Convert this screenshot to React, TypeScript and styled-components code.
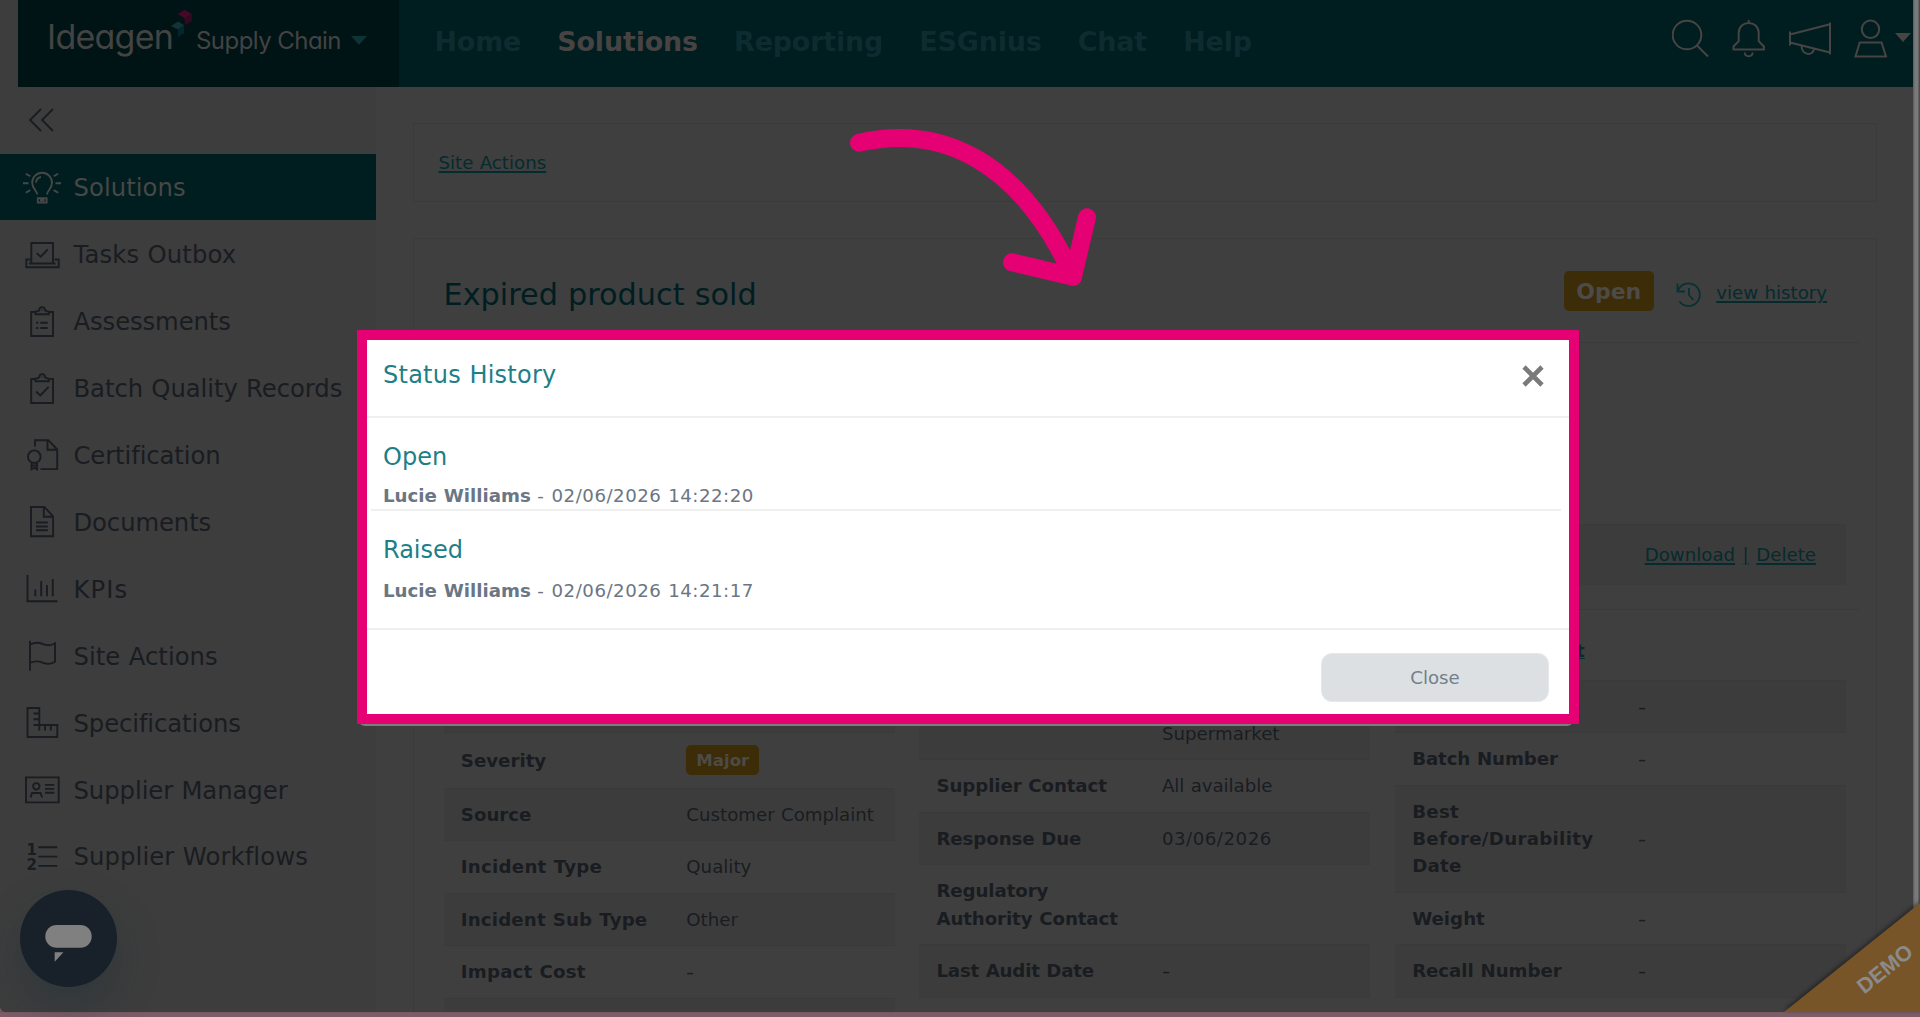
import React from "react";
import styled, { createGlobalStyle, css } from "styled-components";

const c = {
  ground: "#3f3f3f",
  side: "#3d3d3d",
  line: "#3a3a3a",
  shade: "#3c3c3c",
  header: "#001d20",
  brand: "#001315",
  navDim: "#0e2c2f",
  ink: "#191c21",
  teal: "#052b2e",
  title: "#001e21",
  amber: "#3d2c08",
  pink: "#e50073",
};

const Global = createGlobalStyle`
  * { box-sizing: border-box; }
  html, body { margin: 0; padding: 0; overflow: hidden; background: #7c5b65; }
  body {
    font-family: Verdana, "DejaVu Sans", sans-serif;
    font-size: 18.2px;
    word-spacing: 0.03em;
    color: ${c.ink};
  }
`;

const Screen = styled.div`
  position: relative;
  width: 1920px;
  height: 1017px;
  overflow: hidden;
  display: flex;
  flex-direction: column;
  background: linear-gradient(#664d54, #7e5c67 2px, #7e5c67) bottom / 100% 6px no-repeat;
`;

const Frame = styled.div`
  height: 1012px;
  display: flex;
`;

const Page = styled.div`
  width: 1913px;
  height: 1012px;
  overflow: hidden;
  border-bottom-left-radius: 6px;
  background: ${c.ground};
  display: flex;
  flex-direction: column;
`;

const Edge = styled.div`
  width: 7px;
  background: linear-gradient(90deg, #5a5a5a, #7a7a7a 2px, #7a7a7a 5px, #4c4c4c 6px, #4c4c4c);
`;

const Header = styled.header`
  height: 86.5px;
  margin-left: 18px;
  display: flex;
  background: ${c.header};
`;

const HeaderBand = styled.div`
  flex: none;
  background: ${c.side};
`;

const Brand = styled.div`
  width: 381px;
  height: 100%;
  background: ${c.brand};
  padding-left: 29px;
  display: flex;
  font-family: Inter, sans-serif;
  font-feature-settings: "cv11", "ss01";
  word-spacing: 0;
  color: #434343;
`;

const BrandName = styled.span`
  font-size: 34px;
  line-height: 40px;
  margin-top: 17px;
  width: 124px;
  letter-spacing: -0.75px;
  white-space: nowrap;
`;

const Spark = styled.svg`
  width: 22px;
  height: 30px;
  margin-top: 9px;
`;

const Product = styled.span`
  font-size: 24px;
  line-height: 30px;
  margin: 26px 0 0 3px;
  width: 144px;
  letter-spacing: -0.55px;
  white-space: nowrap;
`;

const Caret = styled.i<{ $color: string }>`
  width: 0;
  height: 0;
  border: 8px solid transparent;
  border-top: 9px solid ${(p) => p.$color};
  border-bottom: 0;
`;

const BrandCaret = styled(Caret)`
  margin: 36px 0 0 11px;
`;

const Nav = styled.nav`
  display: flex;
  gap: 36.2px;
  padding: 22px 0 0 35.5px;
  flex: 1;
`;

const NavItem = styled.a<{ $active?: boolean }>`
  font-size: 26.9px;
  line-height: 40px;
  font-weight: 700;
  letter-spacing: -0.15px;
  color: ${(p) => (p.$active ? "#474343" : c.navDim)};
`;

const Tools = styled.div`
  display: flex;
  padding: 17px 2px 0 0;
  svg {
    height: 44px;
    display: block;
  }
`;

const ToolCaret = styled(Caret)`
  margin-top: 16px;
`;

const Body = styled.div`
  flex: 1;
  min-height: 0;
  display: flex;
`;

const Sidebar = styled.aside`
  width: 376px;
  flex: none;
  background: ${c.side};
`;

const Collapse = styled.div`
  height: 67px;
  padding: 21.5px 0 0 28px;
  svg {
    display: block;
  }
`;

const SideItem = styled.a<{ $active?: boolean; $track?: number }>`
  height: 66.95px;
  padding: 1.3px 0 0 22px;
  display: flex;
  align-items: center;
  gap: 11.5px;
  font-size: 24.3px;
  letter-spacing: ${(p) => p.$track ?? 0.05}px;
  white-space: nowrap;
  ${(p) =>
    p.$active &&
    css`
      background: ${c.header};
      color: #474747;
    `}
  svg {
    flex: none;
  }
`;

const Main = styled.main`
  flex: 1;
  padding: 36.5px 36px 0 36.5px;
  display: flex;
  flex-direction: column;
  gap: 36px;
`;

const Card = styled.section<{ $grow?: boolean }>`
  border: 1px solid ${c.line};
  ${(p) =>
    p.$grow
      ? css`
          flex: 1;
          min-height: 0;
          overflow: hidden;
          border-bottom: 0;
        `
      : css`
          height: 79px;
          display: flex;
          align-items: center;
          padding: 0 0 1px 25px;
        `}
`;

const Link = styled.a`
  color: ${c.teal};
  text-decoration: underline;
  text-decoration-thickness: 1.5px;
  text-underline-offset: 2px;
  white-space: nowrap;
`;

const CardHead = styled.div`
  height: 104px;
  margin: 0 17px 0 18px;
  padding: 0 32px 0 12px;
  border-bottom: 1px solid ${c.line};
  display: flex;
  align-items: center;
`;

const Title = styled.h1`
  margin: 8px auto 0 0;
  font-size: 30.3px;
  font-weight: 400;
  color: ${c.title};
`;

const Badge = styled.span<{ $large?: boolean }>`
  display: inline-flex;
  align-items: center;
  justify-content: center;
  background: ${c.amber};
  color: #4c4b47;
  font-weight: 700;
  border-radius: 5px;
  ${(p) =>
    p.$large
      ? css`
          width: 90px;
          height: 40px;
          padding-top: 1px;
          margin-top: 1px;
          font-size: 22px;
        `
      : css`
          width: 73px;
          height: 30.4px;
          font-size: 16.6px;
        `}
`;

const HistoryIcon = styled.svg`
  width: 27px;
  height: 27px;
  margin: 7px 14px 0 21.5px;
`;

const HistoryLink = styled(Link)`
  margin-top: 4px;
`;

const FileRow = styled.div`
  height: 61px;
  margin: 181px 30px 24px;
  padding: 0 30px 1.5px 0;
  background: ${c.shade};
  border-top: 1px solid ${c.line};
  display: flex;
  align-items: center;
  justify-content: flex-end;
  gap: 7.5px;
`;

const Columns = styled.div`
  margin: 0 17px 0 18px;
  padding: 0 13px 0 12px;
  border-top: 1px solid ${c.line};
  display: grid;
  grid-template-columns: repeat(3, 1fr);
  column-gap: 24.5px;
`;

const ColumnHead = styled.h2`
  height: 69.5px;
  margin: 0;
  padding: 27px 0 0 17px;
  width: 190px;
  text-align: right;
  font-size: 18.2px;
  line-height: 27px;
  color: ${c.teal};
  text-decoration: underline;
`;

const DataRow = styled.div<{ $shade: boolean }>`
  display: grid;
  grid-template-columns: 225.5px 1fr;
  align-items: center;
  border-top: 1px solid ${c.line};
  background: ${(p) => (p.$shade ? c.shade : "transparent")};
  line-height: 27.3px;
  & > * {
    padding: 12.1px 0 12.1px 17.3px;
    min-height: 51.5px;
  }
`;

const Term = styled.b<{ $track?: number }>`
  white-space: pre-line;
  letter-spacing: ${(p) => p.$track ?? 0}px;
`;

const Value = styled.span<{ $flush?: boolean; $track?: number }>`
  white-space: pre-line;
  letter-spacing: ${(p) => p.$track ?? 0}px;
  ${(p) =>
    p.$flush &&
    css`
      display: flex;
    `}
`;

const TableEnd = styled.div`
  border-top: 1px solid ${c.line};
`;

/* An unset value, drawn a little wider than a plain hyphen. */
const Unset = styled.span`
  display: inline-block;
  transform: scaleX(1.25);
  transform-origin: 0 50%;
`;

const Modal = styled.div`
  position: absolute;
  left: 357px;
  top: 330px;
  width: 1222px;
  height: 394px;
  border: 10px solid ${c.pink};
  background: #fff;
  color: #6b7684;
  display: flex;
  flex-direction: column;
`;

const ModalLip = styled.div`
  position: absolute;
  left: 359px;
  top: 710px;
  width: 1214px;
  height: 15.5px;
  border-radius: 6px;
  background: #7d7d7d;
`;

const ModalHead = styled.div`
  height: 78px;
  padding: 0 25px 6px 16px;
  border-bottom: 2px solid #efefef;
  display: flex;
  align-items: center;
  justify-content: space-between;
`;

const ModalTitle = styled.h2<{ $track?: number }>`
  margin: 0;
  font-size: 24px;
  line-height: 30px;
  font-weight: 400;
  letter-spacing: ${(p) => p.$track ?? 0}px;
  color: #1d7f88;
`;

const CloseMark = styled.svg`
  display: block;
  margin-top: 2px;
`;

const Entry = styled.div<{ $last?: boolean }>`
  margin: 0 8px 0 4px;
  padding: 24px 0 0 12px;
  ${(p) => !p.$last && "border-bottom: 2px solid #efefef;"}
`;

const EntryMeta = styled.div<{ $last?: boolean }>`
  margin-top: ${(p) => (p.$last ? 12.5 : 11)}px;
  height: ${(p) => (p.$last ? 25 : 26)}px;
  line-height: 25px;
`;

const Stamp = styled.span`
  letter-spacing: 0.5px;
  margin-left: 1.5px;
`;

const ModalFoot = styled.div`
  margin-top: auto;
  height: 86px;
  padding: 23px 20px 0 0;
  border-top: 2px solid #efefef;
  display: flex;
  justify-content: flex-end;
`;

const CloseButton = styled.button`
  width: 228px;
  height: 49px;
  padding: 0;
  border: 1px solid #e4e8ea;
  border-radius: 11px;
  background: #dce0e3;
  color: #747f8c;
  font: inherit;
`;

const Arrow = styled.svg`
  position: absolute;
  left: 840px;
  top: 120px;
`;

const ChatButton = styled.div`
  position: absolute;
  left: 20px;
  top: 890px;
  width: 97px;
  height: 97px;
  border-radius: 50%;
  background: #18212a;
  box-shadow: 0 20px 40px rgba(24, 45, 55, 0.35);
`;

const Ribbon = styled.div`
  position: absolute;
  left: 1784px;
  top: 903px;
  width: 136px;
  height: 109px;
  filter: drop-shadow(0 -2px 2px rgba(0, 0, 0, 0.45));
`;

const RibbonFace = styled.div`
  width: 136px;
  height: 109px;
  background: #785528;
  clip-path: polygon(100% 0, 100% 100%, 0 100%);
`;

const RibbonText = styled.span`
  position: absolute;
  left: 1850px;
  top: 956px;
  width: 70px;
  text-align: center;
  font: 700 21.5px/26px "Liberation Sans", Arial, sans-serif;
  color: #8b8b8b;
  transform: rotate(-38.7deg);
`;

const iconArt: Record<string, React.ReactNode> = {
  bulb: (
    <>
      <path d="M15.2 26.5c0-4-5-5.600-5-11.800a9.900 9.900 0 0 1 19.800 0c0 6.200-5 7.800-5 11.800" />
      <path d="M14 14.500c.3-3 2-5 5-5.500M15.800 30.200h8.800v4.300h-8.800zM18 32.300h4.500" />
      <path d="M1 15.200h5.500M33.500 15.200H39M3.800 5.700l4.500 2.600M36.200 5.700l-4.500 2.600M3.800 24.700l4.500-2.600M36.200 24.700l-4.500-2.600" />
    </>
  ),
  tasks: (
    <>
      <path d="M9.300 28V8H31v20M7 28.500h26.500" />
      <path d="M8.500 24.500H4.300v7.800h32.400v-7.800h-4.200" />
      <path d="M14.700 18.200l4 3.600 7-7.300" />
    </>
  ),
  assess: (
    <>
      <path d="M14 11H9.200v24H31V11h-4.800" />
      <path d="M13.500 13.200v-2.400l3.600-1.200c.3-4.600 5.800-4.600 6.100 0l3.600 1.200v2.400zM20.200 8.800v.8" />
      <path d="M14 21.700h2.300M18.300 21.700h7.500M14 27h2.300M18.300 27h7.500" />
    </>
  ),
  batch: (
    <>
      <path d="M14 11H9.200v24H31V11h-4.800" />
      <path d="M13.500 13.200v-2.400l3.600-1.200c.3-4.600 5.800-4.600 6.100 0l3.600 1.200v2.400zM20.200 8.800v.8" />
      <path d="M14 23.500l4.300 3.900 8.300-8.600" />
    </>
  ),
  cert: (
    <>
      <path d="M13 11.500V5.200h13.300l8.900 9.300v19.600H18.500M25.500 5.200v9.600h9.500" />
      <circle cx="12.300" cy="21.700" r="6.300" />
      <path d="M9.500 28v6.400l2.800-1.600 2.700 1.600V28M9.500 30.500h5.500" />
    </>
  ),
  docs: (
    <>
      <path d="M9 5h13.500l8.600 9.300V34.200H9zM21.800 5v9.800h9" />
      <path d="M14 20.500h11.800M14 24.500h11.800M14 28.300h11.800" />
    </>
  ),
  kpi: (
    <path d="M5.500 6v26.200h30M13.300 20.500v6.700M19.200 12v15.200M25 16v11.200M30.800 10v17.200" />
  ),
  flag: (
    <path d="M8 4.700v30M8 8.500c4-2 8.500-2.400 12.500-.6s8.500 2 12.500-.6v18.500c-4 2.500-8.500 2.500-12.500.8s-8.500-1.600-12.500.3" />
  ),
  ruler: (
    <path d="M5.500 5h11.800v17h18v12H5.500zM11.500 10.500h5.500M11.500 16.200h5.500M11.500 22h6M17.300 22v5.500M23 22v5.500M28.800 22v5.500" />
  ),
  manager: (
    <>
      <path d="M4 7.400h32.700v25H4zM23 14.900h9.300M23 18.900h9.300M23 22.700h9.300" />
      <circle cx="14.300" cy="16.300" r="3.200" />
      <path d="M8.500 27.500l1.500-4.500h8.500l1.700 4.500" />
    </>
  ),
  flow: (
    <>
      <path d="M16.300 10.200h19M16.300 19.600h19M16.300 28.900h19" />
      <text x="4.500" y="17.500">1</text>
      <text x="4.500" y="33">2</text>
    </>
  ),
};

const IconSvg = styled.svg`
  width: 40px;
  height: 40px;
  fill: none;
  stroke: currentColor;
  stroke-width: 1.9;
  text {
    font: 700 15px "DejaVu Sans", sans-serif;
    fill: currentColor;
    stroke: none;
  }
`;

const menu: { icon: string; label: string; track?: number }[] = [
  { icon: "bulb", label: "Solutions" },
  { icon: "tasks", label: "Tasks Outbox", track: 0.12 },
  { icon: "assess", label: "Assessments", track: -0.1 },
  { icon: "batch", label: "Batch Quality Records", track: -0.05 },
  { icon: "cert", label: "Certification", track: -0.1 },
  { icon: "docs", label: "Documents", track: -0.1 },
  { icon: "kpi", label: "KPIs", track: 1.1 },
  { icon: "flag", label: "Site Actions" },
  { icon: "ruler", label: "Specifications", track: -0.1 },
  { icon: "manager", label: "Supplier Manager", track: -0.05 },
  { icon: "flow", label: "Supplier Workflows", track: 0.1 },
];

type Row = {
  term?: string;
  value?: React.ReactNode;
  termTrack?: number;
  valueTrack?: number;
};

const columns: { head: string; rows: Row[] }[] = [
  {
    head: "",
    rows: [
      {},
      { term: "Severity", value: <Badge>Major</Badge> },
      { term: "Source", value: "Customer Complaint" },
      { term: "Incident Type", value: "Quality", termTrack: 0.25 },
      { term: "Incident Sub Type", value: "Other", termTrack: 0.15 },
      { term: "Impact Cost", value: "-", termTrack: 0.2 },
      {},
    ],
  },
  {
    head: "",
    rows: [
      { term: "Name", value: "\nSupermarket" },
      { term: "Supplier Contact", value: "All available", termTrack: -0.1, valueTrack: -0.05 },
      { term: "Response Due", value: "03/06/2026", valueTrack: 0.5, termTrack: -0.1 },
      { term: "Regulatory Authority Contact", termTrack: -0.1 },
      { term: "Last Audit Date", value: "-", termTrack: -0.2 },
    ],
  },
  {
    head: "Product",
    rows: [
      { value: "-" },
      { term: "Batch Number", value: "-", termTrack: -0.1 },
      { term: "Best Before/Durability Date", value: "-", termTrack: 0.3 },
      { term: "Weight", value: "-" },
      { term: "Recall Number", value: "-", termTrack: -0.05 },
    ],
  },
];

const history = [
  { state: "Open", who: "Lucie Williams", when: "02/06/2026 14:22:20" },
  { state: "Raised", who: "Lucie Williams", when: "02/06/2026 14:21:17" },
];

function HeaderTools() {
  return (
    <Tools>
      <svg width="223" viewBox="1672 17 223 44" fill="none" stroke="#474444" strokeWidth="2">
        <circle cx="1687" cy="35" r="14.300" />
        <path d="M1697 45.500l11 11" />
        <path d="M1748.700 20v3M1733.500 49.500v-3l5.200-5.300V33c0-13.500 20-13.500 20 0v8.200l5.200 5.300v3zM1744.700 52.500c.5 5 7.500 5 8 0" />
        <path d="M1790 31.500v14M1790 34.500l40-10.200M1790 42.500l40 10M1830 22.500v32M1801.500 46c.5 9.500 11.500 10.500 12.500 3" />
        <circle cx="1870.500" cy="29.300" r="8.700" />
        <path d="M1859.700 42.500h21.800l4.500 14h-30.500z" />
      </svg>
      <ToolCaret $color="#474444" />
    </Tools>
  );
}

export default function App() {
  return (
    <Screen>
      <Global />
      <Frame>
        <Page>
          <HeaderBand>
            <Header>
              <Brand>
                <BrandName>Ideagen</BrandName>
                <Spark viewBox="0 0 22 30">
                  <path d="M6.500 5L13.500.8 20.700 5v7L14 16l-.5-7z" fill="#430a27" />
                  <path d="M14 9l6.700-4v7L14 16z" fill="#340820" />
                  <path d="M0 17l7-4.500L13 16v8l-6 3.800v-7.300z" fill="#12333a" />
                  <path d="M7 20.500l6-4.500v8l-6 3.800z" fill="#02262c" />
                </Spark>
                <Product>Supply Chain</Product>
                <BrandCaret $color="#0e3235" />
              </Brand>
              <Nav>
                {["Home", "Solutions", "Reporting", "ESGnius", "Chat", "Help"].map((n) => (
                  <NavItem key={n} $active={n === "Solutions"}>
                    {n}
                  </NavItem>
                ))}
              </Nav>
              <HeaderTools />
            </Header>
          </HeaderBand>
          <Body>
            <Sidebar>
              <Collapse>
                <svg width="27" height="24" fill="none" stroke={c.ink} strokeWidth="1.800">
                  <path d="M13 1L2 12l11 11M25 1L14 12l11 11" />
                </svg>
              </Collapse>
              {menu.map(({ icon, label, track }) => (
                <SideItem key={label} $active={icon === "bulb"} $track={track}>
                  <IconSvg viewBox="0 0 40 40">{iconArt[icon]}</IconSvg>
                  {label}
                </SideItem>
              ))}
            </Sidebar>
            <Main>
              <Card>
                <Link>Site Actions</Link>
              </Card>
              <Card $grow>
                <CardHead>
                  <Title>Expired product sold</Title>
                  <Badge $large>Open</Badge>
                  <HistoryIcon viewBox="0 0 27 27" fill="none" stroke="#073235" strokeWidth="1.800">
                    <path d="M2.500 2.500v8h7.500M3 9.500a11.300 11.300 0 1 1 1.500 11M14 7v7l4.500 5" />
                  </HistoryIcon>
                  <HistoryLink>view history</HistoryLink>
                </CardHead>
                <FileRow>
                  <Link>Download</Link>
                  <Link>|</Link>
                  <Link>Delete</Link>
                </FileRow>
                <Columns>
                  {columns.map((col, i) => (
                    <div key={i}>
                      <ColumnHead>{col.head}</ColumnHead>
                      {col.rows.map((row, r) => (
                        <DataRow key={r} $shade={r % 2 === 0}>
                          <Term $track={row.termTrack}>{row.term}</Term>
                          <Value $flush={typeof row.value === "object"} $track={row.valueTrack}>
                            {row.value === "-" ? <Unset>-</Unset> : row.value}
                          </Value>
                        </DataRow>
                      ))}
                      <TableEnd />
                    </div>
                  ))}
                </Columns>
              </Card>
            </Main>
          </Body>
        </Page>
        <Edge />
      </Frame>

      <ChatButton>
        <svg width="97" height="97" fill="#808080">
          <rect x="25.300" y="35" width="46.400" height="22.700" rx="11.300" />
          <path d="M34.700 62.300h8.700l-8.700 9.400z" />
        </svg>
      </ChatButton>

      <Ribbon>
        <RibbonFace />
      </Ribbon>
      <RibbonText>DEMO</RibbonText>

      <ModalLip />
      <Modal>
        <ModalHead>
          <ModalTitle $track={0.25}>Status History</ModalTitle>
          <CloseMark width="22" height="22" fill="none" stroke="#7a7a7a" strokeWidth="4.600">
            <path d="M2 2l18 18M20 2L2 20" />
          </CloseMark>
        </ModalHead>
        {history.map((h, i) => {
          const last = i === history.length - 1;
          return (
            <Entry key={h.state} $last={last}>
              <ModalTitle>{h.state}</ModalTitle>
              <EntryMeta $last={last}>
                <b>{h.who}</b> - <Stamp>{h.when}</Stamp>
              </EntryMeta>
            </Entry>
          );
        })}
        <ModalFoot>
          <CloseButton>Close</CloseButton>
        </ModalFoot>
      </Modal>

      <Arrow
        width="270"
        height="180"
        viewBox="840 120 270 180"
        fill="none"
        stroke={c.pink}
        strokeWidth="18"
        strokeLinecap="round"
        strokeLinejoin="round"
      >
        <path d="M859 142.700C941 124 1020 160 1073 276.500" />
        <path d="M1012 262.300l61 14.500 14-59.500" />
      </Arrow>
    </Screen>
  );
}
